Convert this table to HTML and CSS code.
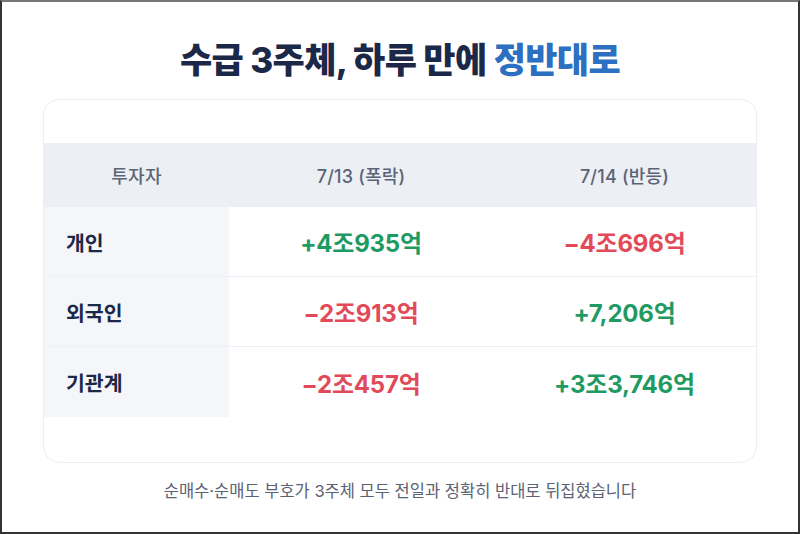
FILE: index.html
```html
<!DOCTYPE html>
<html lang="ko">
<head>
<meta charset="utf-8">
<link rel="stylesheet" href="styles.css">
</head>
<body>
<div class="frame">
  <h1 class="title">수급 3주체, 하루 만에 <span class="accent">정반대로</span></h1>
  <div class="card">
    <div class="table">
      <div class="row head">
        <div class="cell c1">투자자</div>
        <div class="cell">7/13 (폭락)</div>
        <div class="cell">7/14 (반등)</div>
      </div>
      <div class="row">
        <div class="cell c1 label">개인</div>
        <div class="cell val up">+4조935억</div>
        <div class="cell val down">−4조696억</div>
      </div>
      <div class="row">
        <div class="cell c1 label">외국인</div>
        <div class="cell val down">−2조913억</div>
        <div class="cell val up">+7,206억</div>
      </div>
      <div class="row last">
        <div class="cell c1 label">기관계</div>
        <div class="cell val down">−2조457억</div>
        <div class="cell val up">+3조3,746억</div>
      </div>
    </div>
  </div>
  <p class="note">순매수·순매도 부호가 3주체 모두 전일과 정확히 반대로 뒤집혔습니다</p>
</div>
</body>
</html>
```
FILE: styles.css
```css
* { box-sizing: border-box; }
html, body { margin: 0; padding: 0; }
body {
  width: 800px;
  height: 534px;
  font-family: Inter, "Noto Sans CJK KR", sans-serif;
  background: #fff;
}
.frame {
  width: 800px;
  height: 534px;
  border: 2px solid #333;
  border-top-color: #777;
  display: flex;
  flex-direction: column;
  align-items: center;
  padding: 0 41px;
}
.title {
  margin: 32px 0 0;
  height: 52px;
  font-size: 35px;
  line-height: 52px;
  font-weight: 800;
  color: #1c2847;
  letter-spacing: -0.6px;
}
.accent { color: #2d6fc0; }
.card {
  margin-top: 13px;
  width: 714px;
  height: 364px;
  border: 1px solid #eceef2;
  border-radius: 16px;
  padding: 43px 0 44px;
  overflow: hidden;
}
.table { display: flex; flex-direction: column; }
.row {
  display: grid;
  grid-template-columns: 185px 264px 1fr;
  height: 70px;
  border-bottom: 1px solid #eef0f3;
}
.row.last { border-bottom: none; }
.row.head {
  height: 64px;
  background: #eceff3;
  border-bottom: none;
}
.cell {
  display: flex;
  align-items: center;
  justify-content: center;
}
.head .cell {
  font-size: 18px;
  font-weight: 500;
  color: #5b6477;
  letter-spacing: 0.2px;
}
.c1.label {
  background: #f4f6f9;
  justify-content: flex-start;
  padding-left: 22px;
  font-size: 20.5px;
  font-weight: 700;
  color: #1c2847;
}
.val {
  font-size: 24px;
  font-weight: 700;
  letter-spacing: -0.2px;
}
.up { color: #1f9a62; }
.down { color: #e24a59; }
.note {
  margin: 15px 0 0;
  font-size: 16.5px;
  color: #5a6273;
}
```
